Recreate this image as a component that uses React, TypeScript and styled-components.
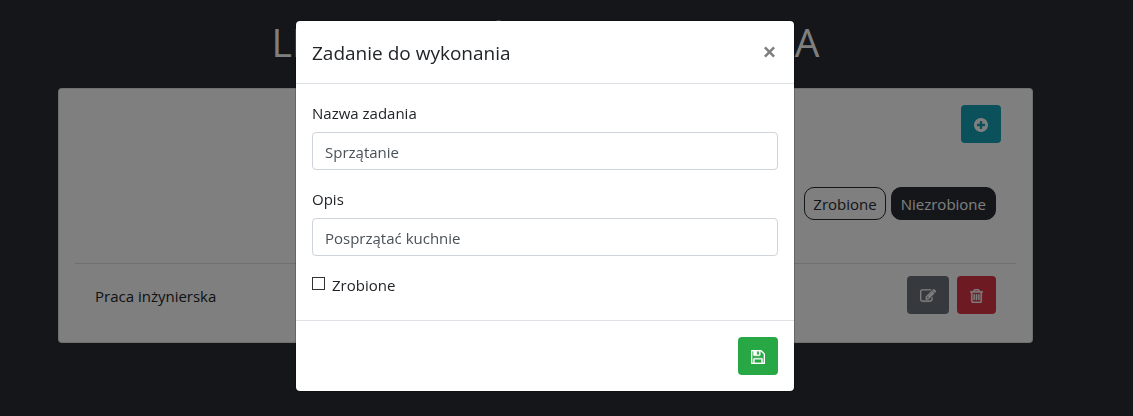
import React from 'react';
import styled, { createGlobalStyle } from 'styled-components';

const GlobalStyle = createGlobalStyle`
  *, *::before, *::after { box-sizing: border-box; }
  body {
    margin: 0;
    background: #282c34;
    color: #212529;
    font-family: "Segoe UI", "Open Sans", "Noto Sans", sans-serif;
    font-size: 15px;
    line-height: 24px;
  }
  h1, h2, p { margin: 0; font-weight: 400; }
  button, input { font: inherit; }
`;

const Page = styled.main`
  min-height: 100vh;
  padding: 18px 100px 0 58px;
`;

const PageTitle = styled.h1`
  margin-bottom: 22px;
  color: #fff;
  font-size: 39px;
  line-height: 48px;
  text-align: center;
`;

const Card = styled.section`
  padding: 16px;
  background: #fff;
  border: 1px solid rgba(0, 0, 0, 0.125);
  border-radius: 4px;
`;

const AddRow = styled.div`
  display: flex;
  justify-content: flex-end;
  padding-right: 15px;
`;

const Filters = styled.div`
  display: flex;
  justify-content: flex-end;
  gap: 5px;
  padding: 44px 20px 43px;
`;

const FilterButton = styled.button<{ $active?: boolean }>`
  height: 33px;
  padding: 0 ${({ $active }) => ($active ? '9px' : '8px')};
  border: 1px solid #282c34;
  border-radius: 10px;
  background: ${({ $active }) => ($active ? '#282c34' : 'transparent')};
  color: ${({ $active }) => ($active ? '#fff' : '#282c34')};
`;

const TaskRow = styled.div`
  display: flex;
  align-items: center;
  justify-content: space-between;
  padding: 12px 20px;
  border-top: 1px solid rgba(0, 0, 0, 0.125);
`;

const TaskName = styled.p`
  padding-top: 2px;
`;

const Actions = styled.div`
  display: flex;
  gap: 8px;
`;

const tones = {
  info: '#17a2b8',
  secondary: '#6c757d',
  danger: '#dc3545',
  success: '#28a745',
};

const IconButton = styled.button<{ $tone: keyof typeof tones }>`
  display: flex;
  align-items: center;
  justify-content: center;
  height: 38px;
  padding: 2px 13px 0;
  border: 0;
  border-radius: 4px;
  background: ${({ $tone }) => tones[$tone]};
  color: #fff;
`;

const Overlay = styled.div`
  position: fixed;
  inset: 0;
  padding: 20px 43px 20px 0;
  overflow: auto;
  background: rgba(0, 0, 0, 0.5);
`;

const Dialog = styled.div`
  max-width: 500px;
  margin: 0 auto;
  background: #fff;
  background-clip: padding-box;
  border: 1px solid rgba(0, 0, 0, 0.2);
  border-radius: 5px;
`;

const DialogHeader = styled.header`
  display: flex;
  align-items: center;
  justify-content: space-between;
  padding: 16px;
  border-bottom: 1px solid #dee2e6;
`;

const DialogTitle = styled.h2`
  padding-top: 2px;
  font-size: 19px;
  line-height: 28px;
`;

const CloseButton = styled.button`
  display: flex;
  padding: 3px;
  border: 0;
  background: none;
  color: #7f7f7f;
`;

const DialogBody = styled.div`
  padding: 16px 16px 22px;
`;

const Field = styled.div`
  margin-bottom: 16px;
`;

const FieldLabel = styled.label`
  display: block;
  padding-top: 1px;
  margin-bottom: 7px;
`;

const TextInput = styled.input`
  display: block;
  width: 100%;
  height: 38px;
  padding: 4px 12px 2px;
  background: #fff;
  border: 1px solid #ced4da;
  border-radius: 4px;
  color: #495057;
`;

const CheckLabel = styled.label`
  display: flex;
  align-items: center;
  gap: 7px;
  padding: 1px 0;
`;

const Checkbox = styled.input`
  appearance: none;
  width: 13px;
  height: 13px;
  margin: 0 0 4px;
  border: 1px solid #333;
  background: #fff;
  &:checked { background: #333; }
`;

const DialogFooter = styled.footer`
  display: flex;
  justify-content: flex-end;
  padding: 16px;
  border-top: 1px solid #dee2e6;
`;

const glyphs = {
  plus: {
    w: 1536,
    box: 14,
    d: 'M1216 832v-128q0-26-19-45t-45-19h-256v-256q0-26-19-45t-45-19h-128q-26 0-45 19t-19 45v256h-256q-26 0-45 19t-19 45v128q0 26 19 45t45 19h256v256q0 26 19 45t45 19h128q26 0 45-19t19-45v-256h256q26 0 45-19t19-45zm320-64q0 209-103 385.500t-279.500 279.500-385.500 103-385.500-103-279.500-279.500-103-385.500 103-385.500 279.500-279.500 385.500-103 385.500 103 279.500 279.500 103 385.500z',
  },
  edit: {
    w: 1792,
    box: 16,
    d: 'M888 1056l116-116-152-152-116 116v56h96v96h56zm440-720q-16-16-33 1l-350 350q-17 17-1 33t33-1l350-350q17-17 1-33zm80 594v190q0 119-84.500 203.500t-203.500 84.500h-832q-119 0-203.500-84.500t-84.500-203.500v-832q0-119 84.500-203.500t203.500-84.500h832q63 0 117 25 15 7 18 23 3 17-9 29l-49 49q-14 14-32 8-23-6-45-6h-832q-66 0-113 47t-47 113v832q0 66 47 113t113 47h832q66 0 113-47t47-113v-126q0-13 9-22l64-64q15-15 35-7t20 29zm-96-738l288 288-672 672h-288v-288zm444 132l-92 92-288-288 92-92q28-28 68-28t68 28l152 152q28 28 28 68t-28 68z',
  },
  trash: {
    w: 1408,
    box: 13,
    d: 'M512 608v576q0 14-9 23t-23 9h-64q-14 0-23-9t-9-23v-576q0-14 9-23t23-9h64q14 0 23 9t9 23zm256 0v576q0 14-9 23t-23 9h-64q-14 0-23-9t-9-23v-576q0-14 9-23t23-9h64q14 0 23 9t9 23zm256 0v576q0 14-9 23t-23 9h-64q-14 0-23-9t-9-23v-576q0-14 9-23t23-9h64q14 0 23 9t9 23zm128 724v-948h-896v948q0 22 7 40.500t14.500 27 10.500 8.500h832q3 0 10.500-8.500t14.500-27 7-40.500zm-672-1076h448l-48-117q-7-9-17-11h-317q-10 2-17 11zm928 32v64q0 14-9 23t-23 9h-96v948q0 83-47 143.500t-113 60.500h-832q-66 0-113-58.500t-47-141.500v-952h-96q-14 0-23-9t-9-23v-64q0-14 9-23t23-9h309l70-167q15-37 54-63t79-26h320q40 0 79 26t54 63l70 167h309q14 0 23 9t9 23z',
  },
  save: {
    w: 1536,
    box: 14,
    d: 'M384 1408h768v-384h-768v384zm896 0h128v-896q0-14-10-38.500t-20-34.500l-281-281q-10-10-34-20t-39-10v416q0 40-28 68t-68 28h-576q-40 0-68-28t-28-68v-416h-128v1280h128v-416q0-40 28-68t68-28h832q40 0 68 28t28 68v416zm-384-928v-320q0-13-9.500-22.500t-22.500-9.500h-192q-13 0-22.500 9.500t-9.500 22.500v320q0 13 9.500 22.500t22.500 9.500h192q13 0 22.500-9.500t9.500-22.500zm640 32v928q0 40-28 68t-68 28h-1344q-40 0-68-28t-28-68v-1344q0-40 28-68t68-28h928q40 0 88 20t76 48l280 280q28 28 48 76t20 88z',
  },
};

function Glyph({ name }: { name: keyof typeof glyphs }) {
  const { w, box, d } = glyphs[name];
  return (
    <svg
      width={box}
      height="14"
      viewBox={`0 0 ${w} 1536`}
      fill="currentColor"
      stroke="currentColor"
      strokeWidth={name === 'plus' ? 0 : 40}
      aria-hidden="true"
    >
      <path d={d} />
    </svg>
  );
}

export default function App() {
  return (
    <>
      <GlobalStyle />
      <Page>
        <PageTitle>LISTA ZADAŃ DO WYKONANIA</PageTitle>
        <Card>
          <AddRow>
            <IconButton $tone="info" aria-label="Dodaj"><Glyph name="plus" /></IconButton>
          </AddRow>
          <Filters>
            <FilterButton>Zrobione</FilterButton>
            <FilterButton $active>Niezrobione</FilterButton>
          </Filters>
          <TaskRow>
            <TaskName>Praca inżynierska</TaskName>
            <Actions>
              <IconButton $tone="secondary" aria-label="Edytuj"><Glyph name="edit" /></IconButton>
              <IconButton $tone="danger" aria-label="Usuń"><Glyph name="trash" /></IconButton>
            </Actions>
          </TaskRow>
        </Card>
      </Page>
      <Overlay>
        <Dialog role="dialog" aria-modal="true" aria-labelledby="dialog-title">
          <DialogHeader>
            <DialogTitle id="dialog-title">Zadanie do wykonania</DialogTitle>
            <CloseButton aria-label="Zamknij">
              <svg width="11" height="12" viewBox="0 0 11 12" fill="none" stroke="currentColor" strokeWidth="2.6">
                <path d="M0.900 1.400L10.100 10.600M10.100 1.400L0.900 10.600" />
              </svg>
            </CloseButton>
          </DialogHeader>
          <DialogBody>
            <Field>
              <FieldLabel htmlFor="task-name">Nazwa zadania</FieldLabel>
              <TextInput id="task-name" type="text" defaultValue="Sprzątanie" />
            </Field>
            <Field>
              <FieldLabel htmlFor="task-text">Opis</FieldLabel>
              <TextInput id="task-text" type="text" defaultValue="Posprzątać kuchnie" />
            </Field>
            <CheckLabel>
              <Checkbox type="checkbox" />
              Zrobione
            </CheckLabel>
          </DialogBody>
          <DialogFooter>
            <IconButton $tone="success" aria-label="Zapisz"><Glyph name="save" /></IconButton>
          </DialogFooter>
        </Dialog>
      </Overlay>
    </>
  );
}
